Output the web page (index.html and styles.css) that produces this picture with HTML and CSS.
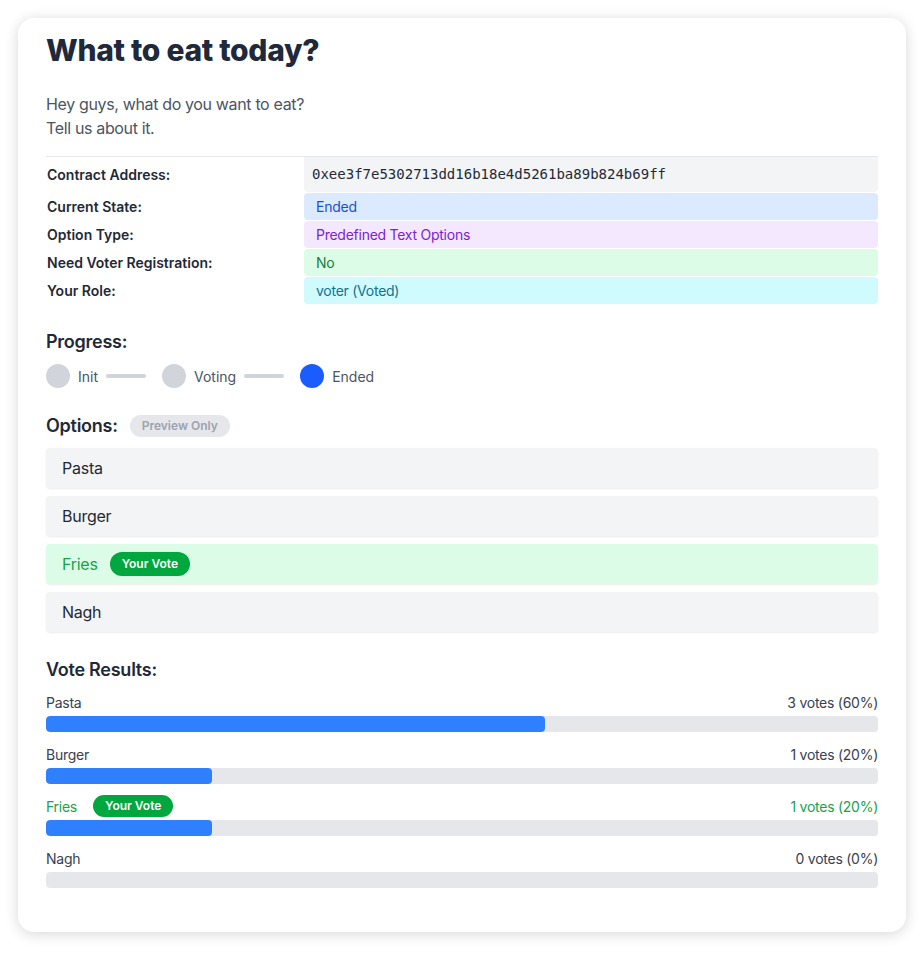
FILE: index.html
```html
<!DOCTYPE html>
<html>
<head>
<meta charset="utf-8">
<link rel="stylesheet" href="styles.css">
</head>
<body>
<div class="page">
  <div class="card">
    <h1 class="title">What to eat today?</h1>
    <p class="desc">Hey guys, what do you want to eat?<br>Tell us about it.</p>

    <div class="info">
      <div class="label first">Contract Address:</div>
      <div class="value addr first">0xee3f7e5302713dd16b18e4d5261ba89b824b69ff</div>
      <div class="label">Current State:</div>
      <div class="value blue">Ended</div>
      <div class="label">Option Type:</div>
      <div class="value purple">Predefined Text Options</div>
      <div class="label">Need Voter Registration:</div>
      <div class="value green">No</div>
      <div class="label">Your Role:</div>
      <div class="value cyan">voter (Voted)</div>
    </div>

    <h2 class="section">Progress:</h2>
    <div class="steps">
      <span class="dot"></span><span class="step-label">Init</span><span class="line"></span>
      <span class="dot"></span><span class="step-label">Voting</span><span class="line"></span>
      <span class="dot active"></span><span class="step-label">Ended</span>
    </div>

    <div class="opt-head">
      <h2 class="section">Options:</h2>
      <span class="preview">Preview Only</span>
    </div>
    <div class="options">
      <div class="option">Pasta</div>
      <div class="option">Burger</div>
      <div class="option voted">Fries <span class="vote-badge">Your Vote</span></div>
      <div class="option">Nagh</div>
    </div>

    <h2 class="section results-title">Vote Results:</h2>
    <div class="results">
      <div class="result">
        <div class="result-row"><span>Pasta</span><span>3 votes (60%)</span></div>
        <div class="bar"><div class="fill" style="width:60%"></div></div>
      </div>
      <div class="result">
        <div class="result-row"><span>Burger</span><span>1 votes (20%)</span></div>
        <div class="bar"><div class="fill" style="width:20%"></div></div>
      </div>
      <div class="result mine">
        <div class="result-row"><span class="name">Fries <span class="vote-badge small">Your Vote</span></span><span>1 votes (20%)</span></div>
        <div class="bar"><div class="fill" style="width:20%"></div></div>
      </div>
      <div class="result">
        <div class="result-row"><span>Nagh</span><span>0 votes (0%)</span></div>
        <div class="bar"><div class="fill" style="width:0%"></div></div>
      </div>
    </div>
  </div>
</div>
</body>
</html>
```

FILE: styles.css
```css
* { box-sizing: border-box; }
html, body { margin: 0; padding: 0; background: #ffffff; }
body { font-family: Inter, "Noto Sans", sans-serif; color: #1f2937; letter-spacing: -0.016em; }

.page { padding: 18px; }

.card {
  width: 888px;
  background: #ffffff;
  border-radius: 16px;
  box-shadow: 0 2px 14px rgba(0, 0, 0, 0.16);
  padding: 14px 28px 44px;
}

.title {
  margin: 0;
  font-size: 30px;
  line-height: 36px;
  font-weight: 800;
  letter-spacing: -0.01em;
  color: #1e293b;
}

.desc {
  margin: 24px 0 16px;
  font-size: 16px;
  line-height: 24px;
  color: #4b5563;
  letter-spacing: -0.022em;
}

.info {
  display: grid;
  grid-template-columns: 258px 1fr;
  row-gap: 1px;
  border-top: 1px solid #e5e7eb;
  font-size: 14px;
}

.label {
  font-size: 14px;
  font-weight: 600;
  color: #1f2937;
  line-height: 19px;
  letter-spacing: 0;
  padding: 4px 0 4px 1px;
}
.label.first { padding: 8px 0 8px 1px; }

.value {
  padding: 4px 12px;
  line-height: 19px;
  border-radius: 4px;
}
.value.addr {
  font-family: "DejaVu Sans Mono", "Liberation Mono", monospace;
  font-size: 14px;
  letter-spacing: 0;
  padding: 8px 8px;
  background: #f3f4f6;
  color: #1f2937;
  border-radius: 0 0 4px 4px;
}
.value.blue { background: #dbeafe; color: #1d4ed8; }
.value.purple { background: #f3e8ff; color: #7e22ce; }
.value.green { background: #dcfce7; color: #15803d; }
.value.cyan { background: #cffafe; color: #0e7490; }

.section {
  margin: 0;
  font-size: 18px;
  line-height: 28px;
  font-weight: 600;
  color: #1f2937;
}
.info + .section { margin-top: 24px; }

.steps {
  display: flex;
  align-items: center;
  margin-top: 8px;
  height: 24px;
}
.dot {
  width: 24px;
  height: 24px;
  border-radius: 50%;
  background: #d1d5db;
  flex: none;
}
.dot.active { background: #1a5cff; }
.step-label {
  margin-left: 8px;
  font-size: 14px;
  color: #4b5563;
  letter-spacing: 0;
}
.line {
  width: 40px;
  height: 4px;
  border-radius: 2px;
  background: #d1d5db;
  margin: 0 16px 0 8px;
}

.opt-head {
  display: flex;
  align-items: center;
  gap: 12px;
  margin-top: 24px;
}
.preview {
  background: #e5e7eb;
  color: #9ca3af;
  font-size: 12px;
  font-weight: 600;
  line-height: 22px;
  padding: 0 12px;
  border-radius: 11px;
  letter-spacing: 0;
}

.options {
  display: flex;
  flex-direction: column;
  gap: 8px;
  margin-top: 8px;
}
.option {
  height: 40px;
  display: flex;
  align-items: center;
  gap: 12px;
  padding: 0 16px;
  background: #f3f4f6;
  border-radius: 4px;
  box-shadow: 0 1px 2px rgba(0, 0, 0, 0.08);
  font-size: 16px;
  color: #1f2937;
}
.option.voted { background: #dcfce7; color: #16a34a; }

.vote-badge {
  display: inline-block;
  background: #00a63e;
  color: #ffffff;
  font-size: 12px;
  font-weight: 600;
  line-height: 24px;
  padding: 0 12px;
  border-radius: 12px;
  letter-spacing: 0;
}
.vote-badge.small { line-height: 22px; margin-left: 16px; }

.results-title { margin-top: 24px; }

.results {
  display: flex;
  flex-direction: column;
  gap: 12px;
  margin-top: 8px;
}
.result-row {
  display: flex;
  justify-content: space-between;
  align-items: center;
  height: 20px;
  font-size: 14px;
  color: #374151;
}
.result.mine .result-row { color: #16a34a; }
.name { display: flex; align-items: center; }
.bar {
  margin-top: 4px;
  height: 16px;
  background: #e5e7eb;
  border-radius: 4px;
  overflow: hidden;
}
.fill {
  height: 100%;
  background: #2f80ff;
  border-radius: 4px;
}
```
